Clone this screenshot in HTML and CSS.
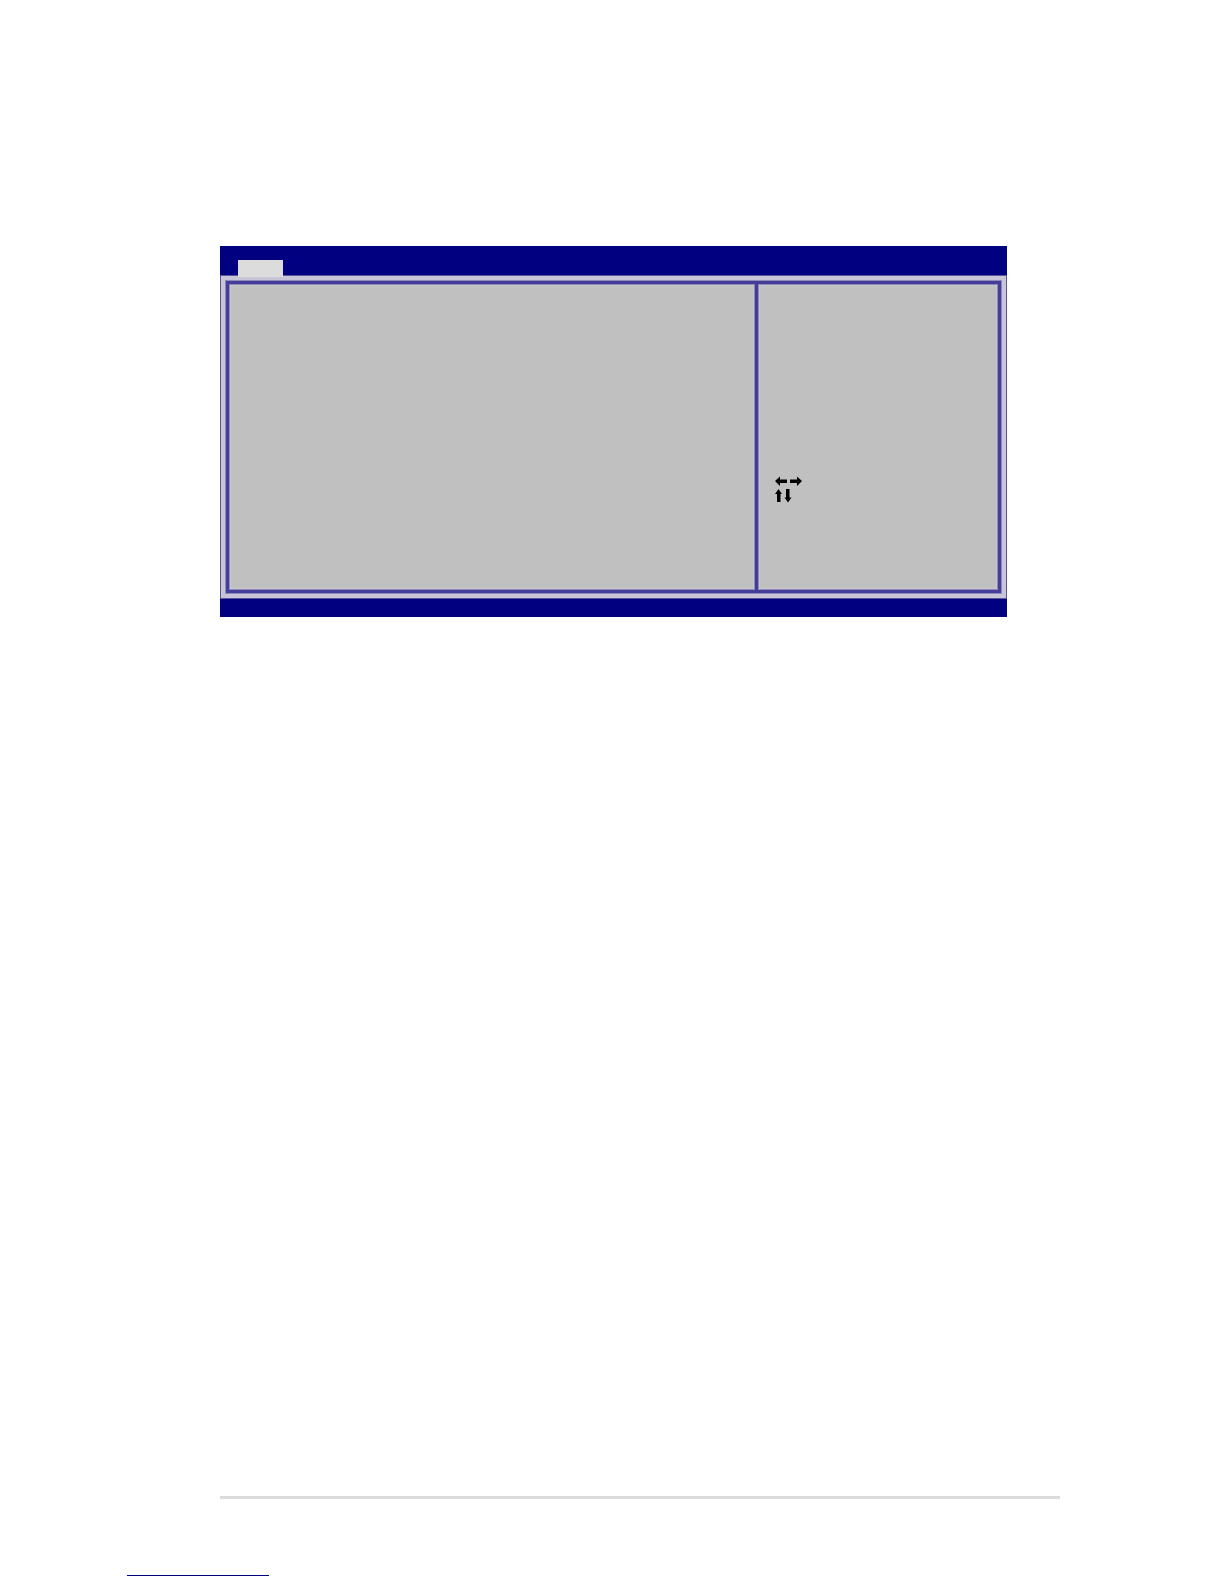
FILE: index.html
```
<!DOCTYPE html>
<html lang="en">

<head>
    <meta charset="UTF-8">
    <meta name="viewport" content="width=device-width, initial-scale=1.0">
    <title>BIOS Setup</title>
    <link rel="stylesheet" href="styles.css">
</head>

<body>
    <main class="content">
        <div class="bios">
            <div class="menu-bar">
                <div class="tab"></div>
            </div>
            <div class="frame">
                <div class="panels">
                    <section class="settings"></section>
                    <aside class="help">
                        <svg class="arrows" width="28" height="27" viewBox="0 0 28 27" aria-hidden="true">
                            <path d="M0 5L5 0.500V3.500H12V7H5V10Z" />
                            <path d="M27 5L22 0.500V3.500H15V7H22V10Z" />
                            <path d="M3.500 13L7 18H5.500V26H2V18H0Z" />
                            <path d="M13 26.500L9.500 21.500H11V13H14.500V21.500H16.500Z" />
                        </svg>
                    </aside>
                </div>
            </div>
        </div>
        <hr class="rule">
    </main>
    <footer class="footer">
        <hr class="footer-line">
    </footer>
</body>

</html>
```
FILE: styles.css
```
body {
    display: flex;
    flex-direction: column;
    min-height: 100vh;
    margin: 0;
    background-color: #fff;
}

.content {
    display: flex;
    flex: 1;
    flex-direction: column;
    justify-content: space-between;
    padding: 246px 164px 0 220px;
}

.bios {
    margin-right: 53px;
    padding-bottom: 18px;
    background-color: #000080;
}

.menu-bar {
    display: flex;
    padding: 14px 18px 0;
}

/* the tab overlaps the top edge of the frame */
.tab {
    position: relative;
    width: 45px;
    height: 17px;
    margin-bottom: -2px;
    background-color: #dcdcdc;
}

.frame {
    padding: 4px;
    border: 1px solid #5a5599;
    background-color: #c8c5d8;
}

/* soft line around and between the panels */
.panels {
    display: flex;
    gap: 5px;
    padding: 4px;
    border: 1px solid #8f8bb8;
    background-color: #443e9a;
}

.settings,
.help {
    min-height: 304px;
    background-color: #c0c0c0;
    box-shadow: 0 0 0 1px #8f8bb8, inset 0 0 2px #d4d2dc;
}

.settings {
    flex: 1;
}

.help {
    width: 238px;
}

.arrows {
    display: block;
    margin: 191px 0 0 16px;
}

.rule {
    width: 100%;
    height: 3px;
    margin: 0;
    border: none;
    background-color: #dcdcdc;
}

.footer {
    padding: 76px 127px 8px;
}

.footer-line {
    width: 142px;
    height: 1px;
    margin: 0;
    border: none;
    background-color: #000080;
}
```
